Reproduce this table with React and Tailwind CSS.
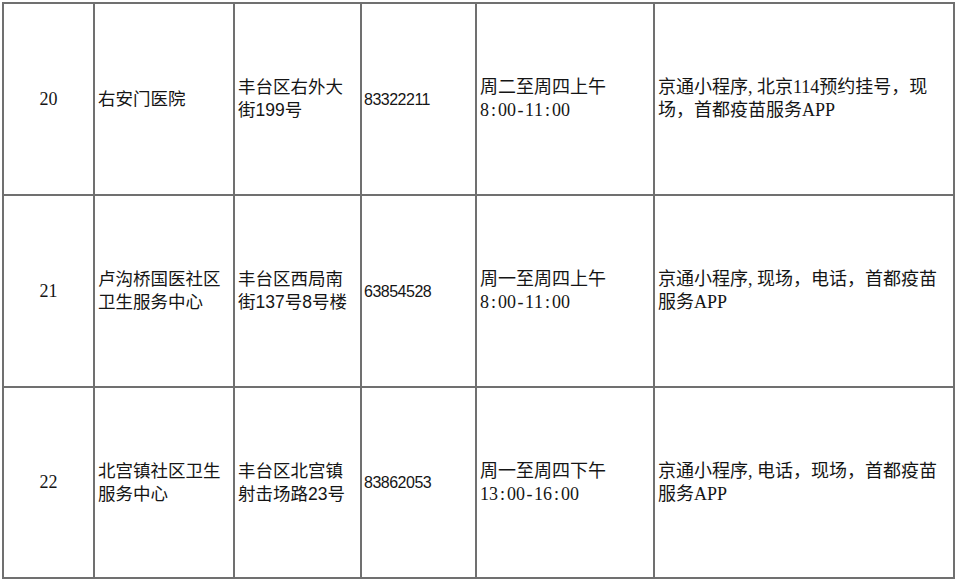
import React from 'react';

const rows = [
  {
    no: '20',
    name: ['右安门医院'],
    addr: ['丰台区右外大', '街199号'],
    phone: '83322211',
    time: ['周二至周四上午', '8:00-11:00'],
    way: [['京通小程序', '北京114预约挂号，现'], ['场，首都疫苗服务APP']],
  },
  {
    no: '21',
    name: ['卢沟桥国医社区', '卫生服务中心'],
    addr: ['丰台区西局南', '街137号8号楼'],
    phone: '63854528',
    time: ['周一至周四上午', '8:00-11:00'],
    way: [['京通小程序', '现场，电话，首都疫苗'], ['服务APP']],
  },
  {
    no: '22',
    name: ['北宫镇社区卫生', '服务中心'],
    addr: ['丰台区北宫镇', '射击场路23号'],
    phone: '83862053',
    time: ['周一至周四下午', '13:00-16:00'],
    way: [['京通小程序', '电话，现场，首都疫苗'], ['服务APP']],
  },
];

const sans = "font-['Liberation_Sans','Noto_Sans_CJK_SC',sans-serif]";
const serif = "font-['Liberation_Serif','Noto_Sans_CJK_SC',serif]";
const cell = 'border-2 border-[#707070] align-middle';

function Lines({ lines }) {
  return lines.map((l, i) => <div key={i}>{l}</div>);
}

// half-width comma followed by its own half-em box, like SimSun
function Way({ lines }) {
  return lines.map((parts, i) => (
    <div key={i}>
      {parts.map((p, j) => (
        <React.Fragment key={j}>
          {j > 0 && <span className="inline-block w-[9px]">,</span>}
          {p}
        </React.Fragment>
      ))}
    </div>
  ));
}

// hours are set on a half-em grid
function Hours({ text }) {
  return (
    <div>
      {text.split('').map((c, i) => (
        <span key={i} className="inline-block w-[9px] text-center">
          {c}
        </span>
      ))}
    </div>
  );
}

export default function App() {
  return (
    <div className="w-[960px] h-[579px] bg-white pt-[2px] pl-[2px] overflow-hidden">
      <table className="border-collapse table-fixed text-[18px] leading-[23px] text-[#151515]">
        <colgroup>
          <col className="w-[91px]" />
          <col className="w-[140px]" />
          <col className="w-[127px]" />
          <col className="w-[115px]" />
          <col className="w-[178px]" />
          <col className="w-[300px]" />
        </colgroup>
        <tbody>
          {rows.map((r, i) => (
            <tr key={r.no} className={i === 2 ? 'h-[191px]' : 'h-[192px]'}>
              <td className={`${cell} text-center ${serif}`}>{r.no}</td>
              <td className={`${cell} pl-[3px] ${sans} text-[17.5px]`}>
                <Lines lines={r.name} />
              </td>
              <td className={`${cell} pl-[3px] ${sans} text-[17.5px]`}>
                <Lines lines={r.addr} />
              </td>
              <td className={`${cell} pl-[2px] ${sans} text-[16px] tracking-[-0.5px]`}>
                {r.phone}
              </td>
              <td className={`${cell} pl-[3px] ${serif}`}>
                <div>{r.time[0]}</div>
                <Hours text={r.time[1]} />
              </td>
              <td className={`${cell} pl-[3px] whitespace-nowrap ${serif}`}>
                <Way lines={r.way} />
              </td>
            </tr>
          ))}
        </tbody>
      </table>
    </div>
  );
}
